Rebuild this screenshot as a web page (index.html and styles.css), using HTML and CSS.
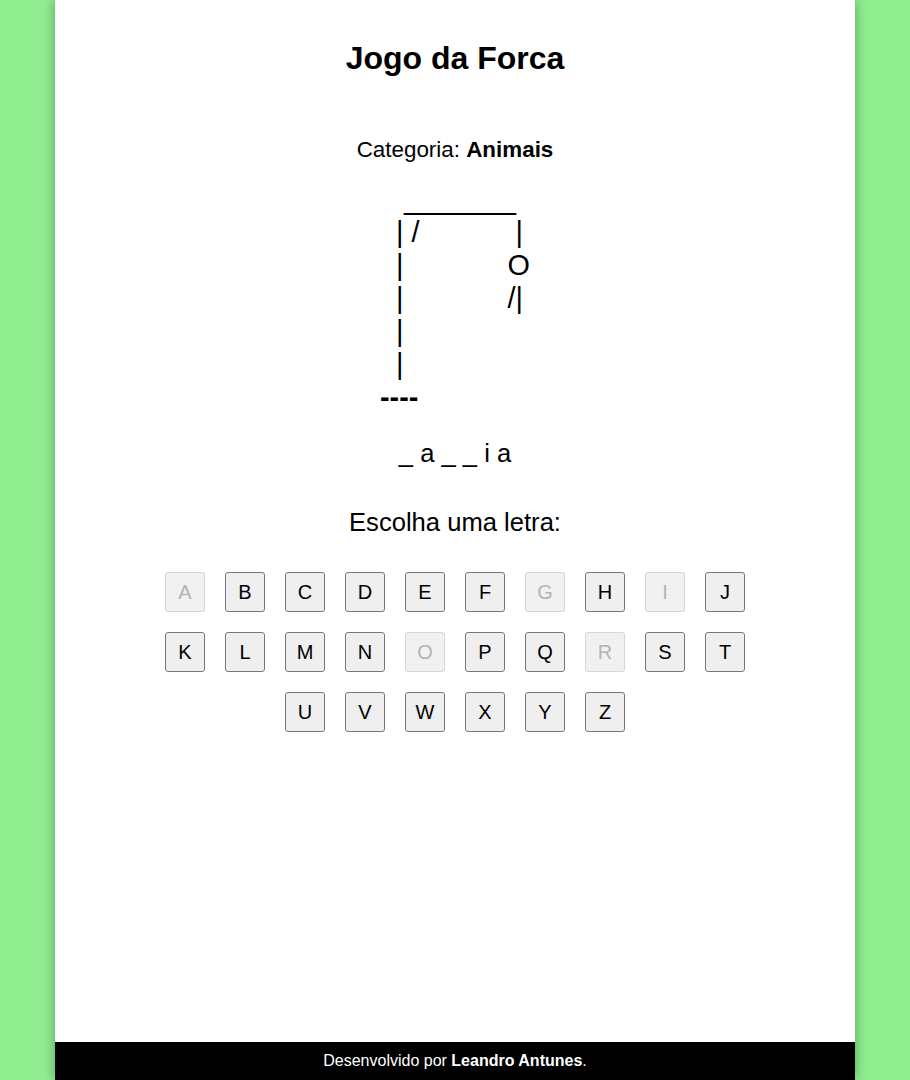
FILE: index.html
```html
<!DOCTYPE html>
<html lang="pt-BR">
<head>
<meta charset="utf-8">
<title>Jogo da Forca</title>
<link rel="stylesheet" href="styles.css">
</head>
<body>
<div class="page">
  <main class="game">
    <h1 class="title">Jogo da Forca</h1>
    <p class="category">Categoria: <strong>Animais</strong></p>
    <pre class="gallows">   _______
  | /            |
  |             O
  |             /|
  |
  |
<b>----</b></pre>
    <p class="word">_ a _ _ i a</p>
    <p class="prompt">Escolha uma letra:</p>
    <div class="keys">
      <button class="key" disabled>A</button>
      <button class="key">B</button>
      <button class="key">C</button>
      <button class="key">D</button>
      <button class="key">E</button>
      <button class="key">F</button>
      <button class="key" disabled>G</button>
      <button class="key">H</button>
      <button class="key" disabled>I</button>
      <button class="key">J</button>
      <button class="key">K</button>
      <button class="key">L</button>
      <button class="key">M</button>
      <button class="key">N</button>
      <button class="key" disabled>O</button>
      <button class="key">P</button>
      <button class="key">Q</button>
      <button class="key" disabled>R</button>
      <button class="key">S</button>
      <button class="key">T</button>
      <button class="key">U</button>
      <button class="key">V</button>
      <button class="key">W</button>
      <button class="key">X</button>
      <button class="key">Y</button>
      <button class="key">Z</button>
    </div>
  </main>
  <footer class="footer">Desenvolvido por <strong>Leandro Antunes</strong>.</footer>
</div>
</body>
</html>
```
FILE: styles.css
```css
html, body {
  margin: 0;
  padding: 0;
}
body {
  background: #90ee90;
  font-family: "Liberation Sans", Arial, sans-serif;
  color: #000;
}
.page {
  width: 800px;
  margin: 0 auto;
  min-height: 100vh;
  background: #fff;
  box-shadow: 0 0 12px rgba(0, 0, 0, 0.35);
  display: flex;
  flex-direction: column;
}
.game {
  flex: 1;
  display: flex;
  flex-direction: column;
  align-items: center;
}
.title {
  margin: 40px 0 0;
  font-size: 32px;
  font-weight: bold;
}
.category {
  margin: 60px 0 0;
  font-size: 22.4px;
}
.gallows {
  margin: 20px 0 0 325px;
  width: 150px;
  font-family: "Liberation Sans", Arial, sans-serif;
  font-size: 28.8px;
  line-height: normal;
  align-self: flex-start;
}
.word {
  margin: 25px 0 0;
  font-size: 25.6px;
}
.prompt {
  margin: 40px 0 0;
  font-size: 25.6px;
}
.keys {
  margin-top: 35px;
  width: 580px;
  display: flex;
  flex-wrap: wrap;
  justify-content: center;
  gap: 20px;
}
.key {
  width: 40px;
  height: 40px;
  padding: 0;
  font-family: "Liberation Sans", Arial, sans-serif;
  font-size: 20px;
  color: #000;
  background: #efefef;
  border: 1px solid #767676;
  border-radius: 3px;
}
.key:disabled {
  color: #b4b4b4;
  background: #f1f1f1;
  border-color: #d6d6d6;
}
.footer {
  background: #000;
  color: #fff;
  text-align: center;
  font-size: 16px;
  padding: 10px 0;
  line-height: 18px;
}
```
